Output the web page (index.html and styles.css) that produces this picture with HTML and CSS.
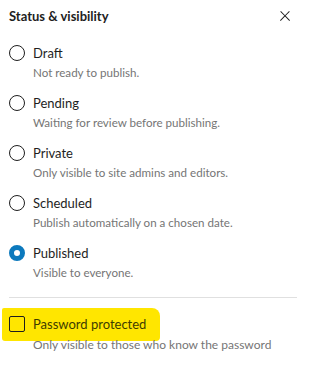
FILE: index.html
```html
<!DOCTYPE html>
<html lang="en">
<head>
    <meta charset="UTF-8">
    <meta name="viewport" content="width=device-width, initial-scale=1.0">
    <title>Status &amp; visibility</title>
    <link rel="stylesheet" href="styles.css">
</head>
<body>
    <div class="panel">
        <div class="panel-header">
            <h2 class="panel-title">Status &amp; visibility</h2>
            <button class="close-button" aria-label="Close">
                <svg width="16" height="16" viewBox="0 0 24 24"><path d="M13 11.8l6.1-6.3-1-1-6.1 6.2-6.1-6.2-1 1 6.1 6.3-6.5 6.7 1 1 6.5-6.6 6.5 6.6 1-1z"/></svg>
            </button>
        </div>

        <div class="options">
            <label class="option">
                <span class="option-row"><input type="radio" name="status" class="radio"> Draft</span>
                <span class="option-help">Not ready to publish.</span>
            </label>
            <label class="option">
                <span class="option-row"><input type="radio" name="status" class="radio"> Pending</span>
                <span class="option-help">Waiting for review before publishing.</span>
            </label>
            <label class="option">
                <span class="option-row"><input type="radio" name="status" class="radio"> Private</span>
                <span class="option-help">Only visible to site admins and editors.</span>
            </label>
            <label class="option">
                <span class="option-row"><input type="radio" name="status" class="radio"> Scheduled</span>
                <span class="option-help">Publish automatically on a chosen date.</span>
            </label>
            <label class="option">
                <span class="option-row"><input type="radio" name="status" class="radio" checked> Published</span>
                <span class="option-help">Visible to everyone.</span>
            </label>
        </div>

        <div class="divider"></div>

        <div class="password">
            <label class="highlight">
                <input type="checkbox" class="checkbox"> Password protected
            </label>
            <p class="option-help">Only visible to those who know the password</p>
        </div>
    </div>
</body>
</html>
```

FILE: styles.css
```css
body {
    font-family: Lato, "Noto Sans", Arial, sans-serif;
    font-size: 13px;
    color: #1e1e1e;
    background-color: #ffffff;
    margin: 0;
    padding: 0;
}

.panel {
    padding: 0 13px 0 9px;
}

.panel-header {
    display: flex;
    justify-content: space-between;
    align-items: center;
    height: 32px;
}

.panel-title {
    margin: 0;
    font-size: 13px;
    font-weight: 700;
    color: #1e1e1e;
}

.close-button {
    display: flex;
    align-items: center;
    justify-content: center;
    width: 16px;
    height: 16px;
    margin-right: 4px;
    padding: 0;
    background: none;
    border: none;
    fill: #1e1e1e;
    cursor: pointer;
}

.options {
    display: flex;
    flex-direction: column;
    gap: 10px;
    margin-top: 11px;
}

.option {
    display: flex;
    flex-direction: column;
    cursor: pointer;
}

.option-row {
    display: flex;
    align-items: center;
    gap: 8px;
    height: 20px;
    line-height: 20px;
}

.option-help {
    margin: 0;
    padding-left: 24px;
    font-size: 11.6px;
    line-height: 20px;
    color: #757575;
}

.radio {
    appearance: none;
    box-sizing: border-box;
    width: 16px;
    height: 16px;
    margin: 0;
    border: 1.5px solid #1e1e1e;
    border-radius: 50%;
    background: #ffffff;
}

.radio:checked {
    border: 5px solid #0c79bd;
}

.divider {
    height: 1px;
    background-color: #e0e0e0;
    margin-top: 14px;
}

.password {
    margin-top: 10px;
}

/* marker highlight drawn over the checkbox row */
.highlight {
    display: inline-flex;
    align-items: center;
    gap: 8px;
    margin-left: -7px;
    padding: 6px 14px 7px 7px;
    height: 20px;
    line-height: 20px;
    background-color: #ffe600;
    color: #3e3c00;
    border-radius: 2px 8px 4px 3px;
}

.checkbox {
    appearance: none;
    box-sizing: border-box;
    width: 16px;
    height: 16px;
    margin: 0;
    border: 1.5px solid #1e1e1e;
    border-radius: 2px;
    background: transparent;
}

.password .option-help {
    margin-top: -6px;
    font-size: 12px;
}
```
